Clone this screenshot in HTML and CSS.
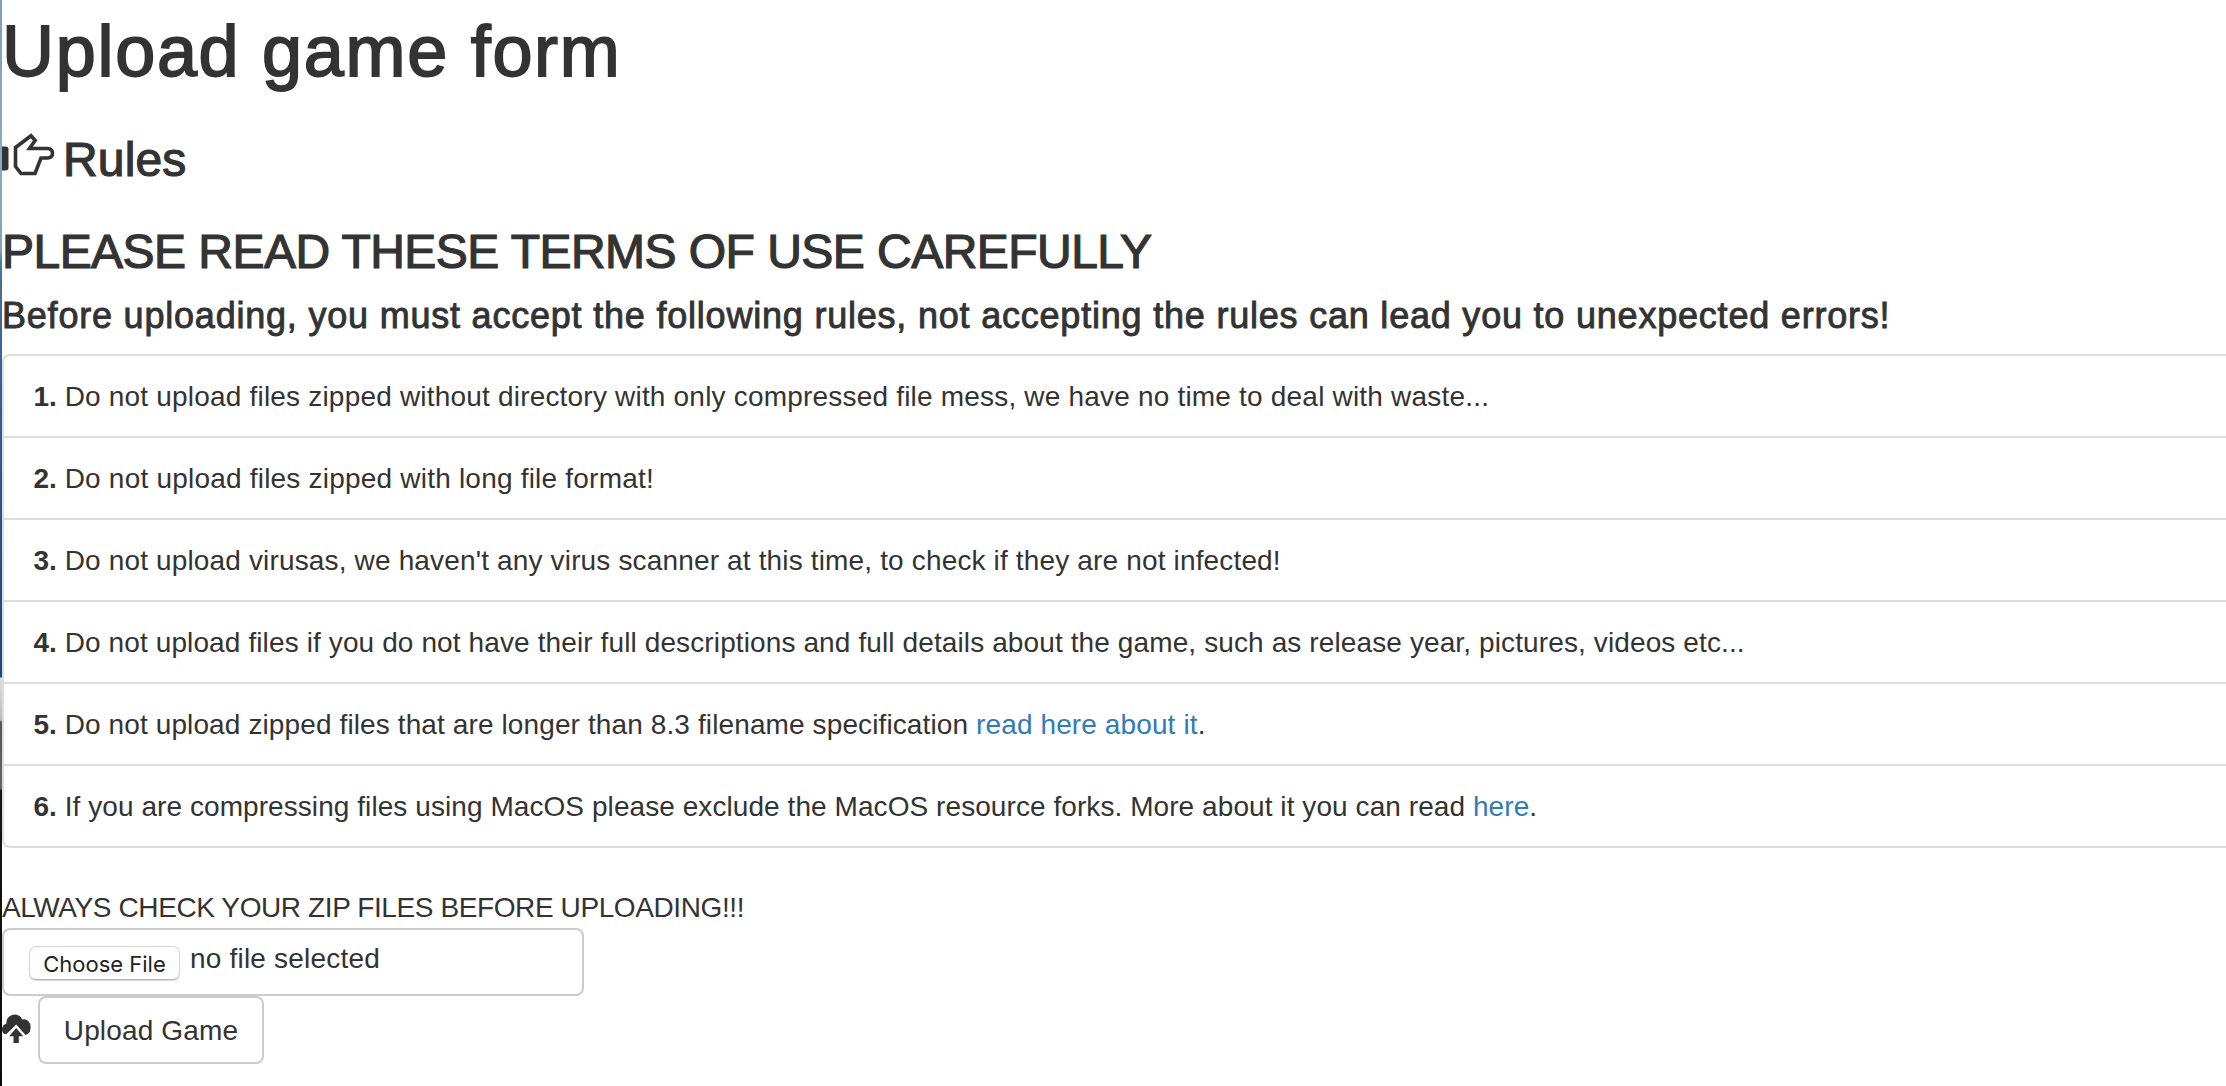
FILE: index.html
```html
<!DOCTYPE html>
<html lang="en">
<head>
<meta charset="utf-8">
<title>Upload game form</title>
<link rel="stylesheet" href="styles.css">
</head>
<body>
<div class="edge"></div>
<main class="page">
<h1>Upload game form</h1>
<h3 class="rules"><svg class="hand" viewBox="0 0 52 42"><path d="M0 12.500h3.500q3 0 3 3v18q0 3-3 3H0z" fill="#333"/><path d="M13.500 13.500L29 1.800l4.200 4.700L27.500 14.500h18.500q4.500.5 4.500 4.700t-4.500 4.800H39l-6 15.500H19l-5.500-7z" fill="none" stroke="#333" stroke-width="3.600"/></svg><span>Rules</span></h3>
<h3 class="terms">PLEASE READ THESE TERMS OF USE CAREFULLY</h3>
<h4>Before uploading, you must accept the following rules, not accepting the rules can lead you to unexpected errors!</h4>
<ul class="list">
<li><b>1.</b> <span class="r1">Do not upload files zipped without directory with only compressed file mess, we have no time to deal with waste...</span></li>
<li><b>2.</b> <span class="r2">Do not upload files zipped with long file format!</span></li>
<li><b>3.</b> <span class="r3">Do not upload virusas, we haven't any virus scanner at this time, to check if they are not infected!</span></li>
<li><b>4.</b> <span class="r4">Do not upload files if you do not have their full descriptions and full details about the game, such as release year, pictures, videos etc...</span></li>
<li><b>5.</b> <span class="r5">Do not upload zipped files that are longer than 8.3 filename specification <a>read here about it</a>.</span></li>
<li><b>6.</b> <span class="r6">If you are compressing files using MacOS please exclude the MacOS resource forks. More about it you can read <a>here</a>.</span></li>
</ul>
<p class="notice">ALWAYS CHECK YOUR ZIP FILES BEFORE UPLOADING!!!</p>
<div class="file"><button class="choose" type="button">Choose File</button><span>no file selected</span></div>
<div class="actions"><svg class="cloud" viewBox="0 0 29 30"><path d="M2.500 20Q0 19 0 15.500 0 11 4.500 9.500 4 5 7.500 2.500 11-.5 15 .8q4 1.200 5 4.800 4-1 6.500 1.700T28.500 14q0 5.500-5 7L14.200 10.500 4.500 20z" fill="#333"/><path d="M14.200 14l7 8.300h-4.400V29h-5.300v-6.700H7.200z" fill="#333"/></svg><button class="upload" type="button">Upload Game</button></div>
</main>
</body>
</html>
```
FILE: styles.css
```css
* { box-sizing: border-box; }
body {
  margin: 0;
  height: 1086px;
  display: flex;
  overflow: hidden;
  font: 28px/40px "Liberation Sans", Arial, sans-serif;
  color: #333;
  background: #fff;
}
.edge {
  flex: 0 0 2px;
  background: linear-gradient(#7f9fbc 0, #8aa8c0 150px, #84a3bb 250px, #4a7ba6 262px, #3f75a5 278px, #56687c 284px, #56687c 294px, #3a6c9c 302px, #2d5b8c 450px, #1f4676 677px, #ddd 678px, #bbb 720px, #555 722px, #666 789px, #151515 790px, #0c0c0c 100%);
}
.page { flex: 1; min-width: 0; padding-top: 12px; }
h1, h3, h4 { font-weight: 400; margin: 0; white-space: nowrap; }
h1 { font-size: 72px; line-height: 79px; letter-spacing: 1.7px; -webkit-text-stroke: 1.8px #333; }
h3 { font-size: 48px; line-height: 53px; -webkit-text-stroke: 1.2px #333; }
.rules { display: flex; margin-top: 42px; letter-spacing: .15px; }
.hand { width: 52px; height: 42px; margin: 1px 9px 0 0; overflow: visible; }
.terms { margin-top: 39px; letter-spacing: -.54px; }
h4 { font-size: 36px; line-height: 40px; margin-top: 18px; letter-spacing: .79px; -webkit-text-stroke: .9px #333; }
.list {
  list-style: none;
  margin: 18px 0 0;
  padding: 0;
  border: 2px solid #ddd;
  border-right: 0;
  border-radius: 8px 0 0 8px;
}
.list li { padding: 21px 0 19px 29.5px; white-space: nowrap; }
.list li + li { border-top: 2px solid #ddd; }
.r1 { letter-spacing: .195px; }
.r2 { letter-spacing: .21px; }
.r3 { letter-spacing: .155px; }
.r4 { letter-spacing: .115px; }
.r5 { letter-spacing: .115px; }
.r6 { letter-spacing: .07px; }
a { color: #337ab7; }
.notice { margin: 40px 0 0; letter-spacing: -.4px; }
.file {
  display: flex;
  width: 582px;
  height: 68px;
  padding: 9px 0 0 25px;
  border: 2px solid #ccc;
  border-radius: 8px;
  letter-spacing: .2px;
}
.choose {
  width: 151px;
  height: 34px;
  margin: 7px 10px 0 0;
  padding: 1px 0 0;
  font: 22px/28px Inter, sans-serif;
  letter-spacing: 0;
  color: #222;
  background: #fff;
  border: 1px solid #d5d5d5;
  border-bottom-color: #b5b5b5;
  border-radius: 7px;
  box-shadow: 0 1px 1px rgba(0, 0, 0, .15);
}
.actions { display: flex; }
.cloud { width: 29px; height: 30px; margin: 18px 7px 0 0; }
.upload {
  width: 226px;
  height: 68px;
  padding: 2px 0 0;
  font: inherit;
  letter-spacing: .15px;
  color: #333;
  background: #fff;
  border: 2px solid #ccc;
  border-radius: 8px;
}
```
